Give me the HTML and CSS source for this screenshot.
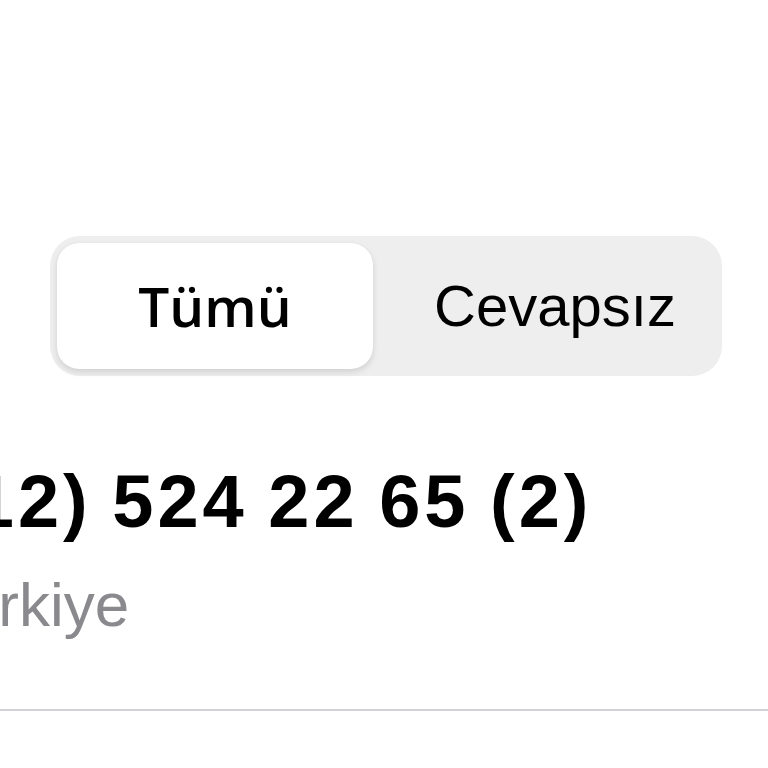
FILE: index.html
```html
<!DOCTYPE html>
<html lang="tr">
<head>
<meta charset="utf-8">
<title>Son Aramalar</title>
<link rel="stylesheet" href="styles.css">
</head>
<body>
<div class="screen">
  <div class="segmented">
    <div class="segment segment-active">Tümü</div>
    <div class="segment segment-rest">Cevapsız</div>
  </div>
  <div class="contact">
    <div class="phone">(212) 524 22 65 (2)</div>
    <div class="country">Türkiye</div>
  </div>
  <div class="separator"></div>
</div>
</body>
</html>
```
FILE: styles.css
```css
html, body {
  margin: 0;
  padding: 0;
  background: #ffffff;
  overflow: hidden;
}

.screen {
  width: 768px;
  height: 768px;
  display: flex;
  flex-direction: column;
  padding-top: 236px;
  box-sizing: border-box;
  font-family: "Liberation Sans", Arial, sans-serif;
  color: #000;
}

.segmented {
  margin-left: 50px;
  width: 672px;
  height: 140px;
  box-sizing: border-box;
  padding: 7px;
  background: #eeeeef;
  border-radius: 30px;
  display: flex;
}

.segment {
  flex: 1;
  display: flex;
  align-items: center;
  justify-content: center;
  font-size: 58px;
  padding-bottom: 2px;
  box-sizing: border-box;
}

.segment-rest {
  padding-left: 22px;
}

.segment-active {
  flex: 0 0 316px;
  background: #ffffff;
  border-radius: 22px;
  font-family: "Open Sans", sans-serif;
  font-weight: 600;
  font-size: 55px;
  box-shadow: 0 3px 6px rgba(0, 0, 0, 0.12), 0 0 1px rgba(0, 0, 0, 0.08);
}

.contact {
  margin-top: 89px;
  margin-left: -101px;
  white-space: nowrap;
}

.phone {
  font-size: 74px;
  line-height: 74px;
  font-weight: bold;
  letter-spacing: 4px;
  word-spacing: -4px;
}

.country {
  margin-top: 35px;
  font-size: 62px;
  line-height: 62px;
  color: #8a8a8e;
  padding-left: 27px;
}

.separator {
  margin-top: 73px;
  height: 2px;
  background: #d2d2d6;
}
```
